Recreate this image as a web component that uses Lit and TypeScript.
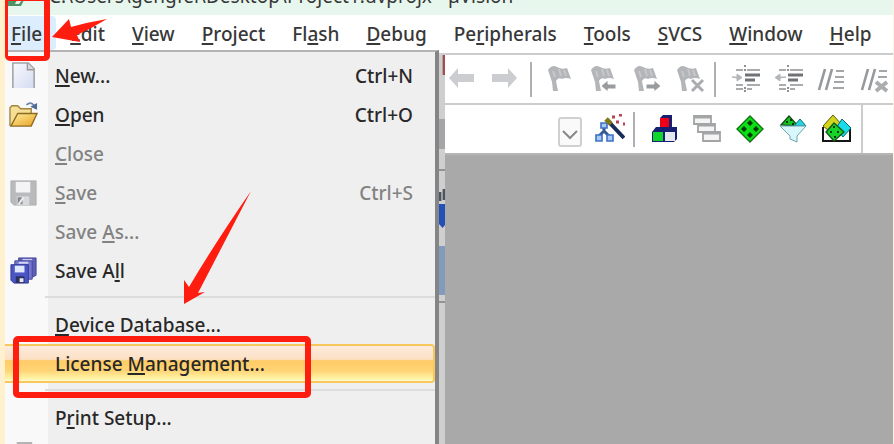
import { LitElement, html, css, svg, nothing } from "lit";
import { customElement } from "lit/decorators.js";
import { classMap } from "lit/directives/class-map.js";

type Row = { pre: string; key: string; post: string; shortcut?: string; icon?: unknown; off?: boolean; hot?: boolean } | null;

const newIcon = svg`<svg class="ico" viewBox="0 0 30 30"><defs><linearGradient id="pg" x1="0" y1="0" x2="1" y2="1"><stop offset="0" stop-color="#f8f9fd"/><stop offset="1" stop-color="#d5dcf2"/></linearGradient></defs><path d="M4 28V2H20L26 8V28" fill="url(#pg)" stroke="#a2a2a6" stroke-width="1.6"/><path d="M19 2V9H26" fill="#d8d8dc" stroke="#999" stroke-width="1.4"/></svg>`;
const openIcon = svg`<svg class="ico" viewBox="0 0 30 30"><defs><linearGradient id="fg" x1="0" y1="0" x2="1" y2="1"><stop offset="0" stop-color="#fff0a0"/><stop offset="1" stop-color="#e8a020"/></linearGradient></defs><path d="M1 27V8L3 6H9L12 9H23V14" fill="#f5df96" stroke="#a08440" stroke-width="1.4"/><path d="M2 27L9 14H29L23 27Z" fill="url(#fg)" stroke="#8c6a20" stroke-width="1.4"/><path d="M18 5Q23 1 26 6" fill="none" stroke="#6d86ac" stroke-width="1.8"/><path d="M22 7L29 3V10Z" fill="#4f6b98"/></svg>`;
const saveIcon = svg`<svg class="ico" viewBox="0 0 30 30"><path d="M2 3H28V28H5L2 25Z" fill="#b9babc" stroke="#acadaf"/><path d="M7 4H22V15H7Z" fill="#f4f4f6"/><path d="M8 19H21V28H8Z" fill="#d8d9dc"/><path d="M9 20H14V27H9Z" fill="#85878a"/><path d="M15 20L10 27" stroke="#eee" stroke-width="2"/></svg>`;
const saveAllIcon = svg`<svg class="ico" viewBox="0 0 30 30"><path d="M10 2H28V20L24 22H10Z" fill="#5e60b8" stroke="#44479c"/><path d="M14 4H24" stroke="#c8caf0" stroke-width="2"/><path d="M6 5H24V24H6Z" fill="#7477cc" stroke="#44479c"/><path d="M10 7H20" stroke="#d4d6f6" stroke-width="2"/><path d="M2 9H20V28H5L2 25Z" fill="#4a56c4" stroke="#34389a"/><path d="M6 10H16V17H6Z" fill="#dfe8fc"/><path d="M7 21H16V28H7Z" fill="#2b3160"/><path d="M11 23H15V27H11Z" fill="#e8e8f0"/></svg>`;
const printIcon = svg`<svg class="ico" viewBox="0 0 30 30"><path d="M9 1H23V10H9Z" fill="#f0f0f0" stroke="#b4b4b4" stroke-width="2"/><path d="M3 10H27V24H3Z" fill="#c4c6ca" stroke="#8d9094"/></svg>`;

const rows: Row[] = [
  { pre: "", key: "N", post: "ew...", shortcut: "Ctrl+N", icon: newIcon },
  { pre: "", key: "O", post: "pen", shortcut: "Ctrl+O", icon: openIcon },
  { pre: "", key: "C", post: "lose", off: true },
  { pre: "", key: "S", post: "ave", shortcut: "Ctrl+S", icon: saveIcon, off: true },
  { pre: "Save ", key: "A", post: "s...", off: true },
  { pre: "Save A", key: "l", post: "l", icon: saveAllIcon },
  null,
  { pre: "", key: "D", post: "evice Database..." },
  { pre: "License ", key: "M", post: "anagement...", hot: true },
  null,
  { pre: "P", key: "r", post: "int Setup..." },
];

const menus: [string, string, string][] = [
  ["", "F", "ile"], ["", "E", "dit"], ["", "V", "iew"], ["", "P", "roject"], ["Fl", "a", "sh"], ["", "D", "ebug"],
  ["Pe", "r", "ipherals"], ["", "T", "ools"], ["", "S", "VCS"], ["", "W", "indow"], ["", "H", "elp"],
];

const flag = svg`<path d="M1 6Q5 0 10 3T20 4L24 15Q19 13 15 15Q11 13 9 17L11 27H6L5 18Z" fill="#b3b5b8"/><path d="M6 7L8 13M12 5L14 12M17 6L19 12" stroke="#c6c8ca" stroke-width="2"/>`;
const tool = (name: string, body: unknown) => html`<button class="tool" aria-label=${name}><svg viewBox="0 0 30 30">${body}</svg></button>`;
const lines = svg`<path d="M14 1V3M14 5V7M14 23V25M14 26V28" stroke="#8d9093" stroke-width="2"/><path d="M5 6H12M16 6H29M5 21H12M16 21H29M5 25H12M16 25H21" stroke="#8d9093" stroke-width="1.6"/><path d="M14 11H29M14 16H24" stroke="#707376" stroke-width="3"/>`;
const indent = svg`${lines}<path d="M1 13H6V10L11 13.500L6 17V14Z" fill="#b4b7ba" stroke="#b4b7ba"/>`;
const outdent = svg`${lines}<path d="M12 13H6V10L1 13.500L6 17V14Z" fill="#b4b7ba" stroke="#b4b7ba"/>`;
const slashes = svg`<path d="M8 5L2 26M15 5L9 26" stroke="#96999c" stroke-width="2.600"/><path d="M19 7H27M18 13H27M17 18H27M16 24H27" stroke="#a3a6a9" stroke-width="1.800"/>`;

@customElement("app-root")
export class AppRoot extends LitElement {
  static styles = css`
    :host { display: block; position: relative; min-height: 100vh; overflow: hidden; background: #a9a9a9; color: #383838; font: 500 19px/26px "Noto Sans", "Open Sans", sans-serif; box-sizing: border-box; border-left: 5px solid #fff1ce; border-right: 1px solid #fbf4e3; }
    button { font: inherit; color: inherit; border: 0; background: none; padding: 0; margin: 0; text-align: left; white-space: nowrap; }
    u { text-decoration-thickness: 2px; text-underline-offset: 2px; text-decoration-skip-ink: none; }
    svg { display: block; }
    .title { position: relative; height: 15px; background: #e7f7ee; display: flex; align-items: flex-end; padding-left: 44px; overflow: hidden; }
    .title span { white-space: nowrap; font-weight: 400; margin-bottom: 6px; }
    .appicon { position: absolute; left: 2px; top: 0; width: 18px; height: 6px; }
    .menubar { display: flex; background: #fff; height: 38px; align-items: flex-start; box-sizing: border-box; }
    .menubar button { height: 34px; margin-top: 1px; padding: 5px 0 3px; flex: none; margin-right: 27px; }
    .menubar button.active { background: #dceefd; padding: 5px 14px 3px 6px; margin-right: 14px; border-radius: 0 4px 4px 0; }
    .tools { margin-left: 440px; background: #fff; }
    .bar { display: flex; align-items: center; height: 50px; border-top: 2px solid #cbccce; box-sizing: border-box; padding-left: 4px; overflow: hidden; }
    .bar.second { height: 52px; border-bottom: 2px solid #b6b6b6; padding-left: 5px; }
    .tool { width: 30px; height: 30px; flex: none; margin-right: 13px; }
    .sep { width: 2px; height: 35px; background: #aeb0b2; flex: none; margin: 0 15px 0 -5px; }
    .end { width: 2px; align-self: stretch; background: #cbccce; flex: none; margin-left: -4px; }
    .menu { position: absolute; left: 0; top: 50px; width: 434px; height: calc(100% - 50px); box-sizing: border-box; border-top: 2px solid #b4b4b4; border-right: 4px solid #858585; background: linear-gradient(to right, #f9f9f9 43px, #efefef 43px); padding-top: 4px; overflow: hidden; }
    .item { display: flex; align-items: center; width: 100%; height: 39px; box-sizing: border-box; padding-right: 20px; color: #282828; border: 2px solid transparent; border-left: 0; }
    .item.off { color: #828282; }
    .item.hot { border-color: #f8c85c; border-radius: 0 4px 4px 0; background: linear-gradient(#fdebdc, #fce0c4 38%, #ffcb66 42%, #ffd475 70%, #fff5a8 94%, #fff8d8); }
    .slot { width: 50px; flex: none; }
    .ico { width: 29px; height: 29px; margin-left: 4px; }
    .label { flex: 1; }
    .rule { height: 2px; background: #dcdcdc; margin: 6px 0 7px 40px; }
    .peek { position: absolute; left: 434px; top: 53px; width: 6px; height: calc(100% - 53px); }
    .mark { position: absolute; box-sizing: border-box; border: 5px solid #ff1d10; border-radius: 5px; pointer-events: none; }
    .mark.file { left: 0; top: -4px; width: 45px; height: 65px; border-left-width: 3px; border-right-width: 6px; }
    .mark.license { left: 8px; top: 336px; width: 298px; height: 62px; border-width: 6px; }
    .arrows { position: absolute; left: 0; top: 0; width: 260px; height: 310px; pointer-events: none; }
    .combo { appearance: none; width: 24px; height: 30px; margin: 6px 13px 0 108px; padding: 0; border: 2px solid #d0d0d0; border-radius: 3px; background: #fafafa; }
    .pick { position: relative; flex: none; display: flex; }
    .pick svg { position: absolute; right: 17px; bottom: 7px; width: 16px; height: 10px; pointer-events: none; }
  `;

  render() {
    return html`
      <div class="title"><svg class="appicon" viewBox="0 0 18 6"><path d="M0 0H17L14 6H0Z" fill="#4f9468"/><path d="M10 0H15L12 4H8Z" fill="#e7f7ee"/></svg><span>C:\\Users\\gengfei\\Desktop\\Project1.uvprojx - µVision</span></div>
      <nav class="menubar">${menus.map(([a, k, b], i) => html`<button class=${classMap({ active: i === 0 })}>${a}<u>${k}</u>${b}</button>`)}</nav>
      <div class="tools">
        <div class="bar first">
          ${tool("Back", svg`<path d="M0 14L9 4V10H25V18H9V24Z" fill="#cbcdd0"/>`)}
          ${tool("Forward", svg`<path d="M25 14L16 4V10H0V18H16V24Z" fill="#cbcdd0"/>`)}
          <span class="sep"></span>
          ${tool("Bookmark", flag)}
          ${tool("Previous bookmark", svg`${flag}<path d="M11 22L18 16V20H26V25H18V28Z" fill="#999c9f" stroke="#fff"/>`)}
          ${tool("Next bookmark", svg`${flag}<path d="M28 22L21 16V20H13V25H21V28Z" fill="#999c9f" stroke="#fff"/>`)}
          ${tool("Clear bookmarks", svg`${flag}<path d="M16 16L27 27M27 16L16 27" stroke="#fff" stroke-width="5"/><path d="M16 16L27 27M27 16L16 27" stroke="#a9acaf" stroke-width="3"/>`)}
          <span class="sep"></span>
          ${tool("Indent", indent)} ${tool("Unindent", outdent)} ${tool("Comment", slashes)}
          ${tool("Uncomment", svg`${slashes}<path d="M15 17H28V28H15Z" fill="#fff"/><path d="M16 18L27 27M27 18L16 27" stroke="#aaadb0" stroke-width="4"/>`)}
        </div>
        <div class="bar second">
          <span class="pick"><select class="combo" aria-label="Target"></select><svg viewBox="0 0 16 10"><path d="M1 1L8 8L15 1" fill="none" stroke="#888" stroke-width="2"/></svg></span>
          ${tool("Options for target", svg`<path d="M9 12V19M9 17L4 22M9 17L14 22" stroke="#34598e" stroke-width="3"/><path d="M6 9H12V14H6ZM1 21H7V27H1ZM12 21H18V27H12Z" fill="#a9c9f4" stroke="#3c70c8" stroke-width="1.600"/><path d="M12 6L29 24" stroke="#182c58" stroke-width="4"/><path d="M11 5L16 10" stroke="#817a1b" stroke-width="5"/><path d="M17 3H20M24 1H27M21 8H24M28 10H30" stroke="#b64454" stroke-width="3"/>`)}
          <span class="sep"></span>
          ${tool("Components", svg`<path d="M10 4L13 1H22V13H10Z" fill="#172070"/><path d="M10 4H19V14H10Z" fill="#f00018"/><path d="M2 18L6 13H27V25L24 28H2Z" fill="#172070"/><path d="M3 18H13V27H3Z" fill="#10d62c"/><path d="M15 18H25V27H15Z" fill="#e4e8ee"/>`)}
          ${tool("Windows", svg`<g fill="#f4f4f4" stroke="#a2a4a6" stroke-width="1.800"><path d="M1 2H18V10H1Z"/><path d="M5 10H22V18H5Z"/><path d="M10 18H27V27H10Z"/></g><path d="M1 3H18M5 11H22M10 19H27" stroke="#a2a4a6" stroke-width="3"/>`)}
          ${tool("Packs", svg`<path d="M14 2L27 15L14 28L1 15Z" fill="#0be014" stroke="#167016" stroke-width="1.400"/><path d="M14 6L17 9L14 12L11 9ZM14 18L17 21L14 24L11 21ZM8 12L11 15L8 18L5 15ZM20 12L23 15L20 18L17 15Z" fill="#063806"/>`)}
          ${tool("Filter", svg`<path d="M2 11L10 2L19 12Z" fill="#12c820" stroke="#174c1a" stroke-width="1.400"/><path d="M15 12L21 5L27 12Z" fill="#25d6e2" stroke="#126d78"/><path d="M1 12H27L18 22V28L11 25V22Z" fill="#d9f6fb" stroke="#6aa6b0"/><path d="M7 8H9M11 6H13M13 10H15" stroke="#083808" stroke-width="2"/>`)}
          ${tool("Pack installer", svg`<path d="M1 13V27H28V13" fill="#fff" stroke="#151515" stroke-width="2"/><path d="M1 12L11 1L20 11L11 20Z" fill="#d1d51b" stroke="#57580c"/><path d="M20 5L29 14L21 23L14 14Z" fill="#18dce8" stroke="#0c6770"/><path d="M12 9L22 18L12 27L4 18Z" fill="#16d328" stroke="#115919" stroke-width="1.400"/><path d="M11 13H13M8 18H10M15 18H17M12 23H14" stroke="#053708" stroke-width="2"/>`)}
          <span class="end"></span>
        </div>
      </div>
      <svg class="peek" viewBox="0 0 5 391" preserveAspectRatio="none"><path d="M0 0H5V391H0Z" fill="#cfcfcf"/><path d="M3 2H5V22H3Z" fill="#a05050"/><path d="M0 66H5V96H0Z" fill="#a5a5a8"/><path d="M0 117H5M0 249H5" stroke="#929292" stroke-width="2"/><path d="M0 139H2V148H0ZM3 136H5V147H3Z" fill="#4c535c"/><path d="M0 151H5V172L3 175L0 171Z" fill="#2250b8"/><path d="M0 193H5V242H0Z" fill="#819bbc"/></svg>
      <div class="menu">${rows.map((r) => r ? html`<button class=${classMap({ item: true, off: !!r.off, hot: !!r.hot })} ?disabled=${r.off}><span class="slot">${r.icon ?? nothing}</span><span class="label">${r.pre}<u>${r.key}</u>${r.post}</span><span>${r.shortcut ?? nothing}</span></button>` : html`<div class="rule"></div>`)}<button class="item" aria-label="Print"><span class="slot">${printIcon}</span></button></div>
      <div class="mark file"></div><div class="mark license"></div>
      <svg class="arrows" viewBox="0 0 260 310" aria-hidden="true"><path d="M47 37L64 19L66 27Q84 22 102 19Q87 28 72 35L75 42Z" fill="#ff1d10"/><path d="M246 191L193 293L200 292L179 304V280L184 287Q210 243 246 191Z" fill="#ff1d10"/></svg>
    `;
  }
}
